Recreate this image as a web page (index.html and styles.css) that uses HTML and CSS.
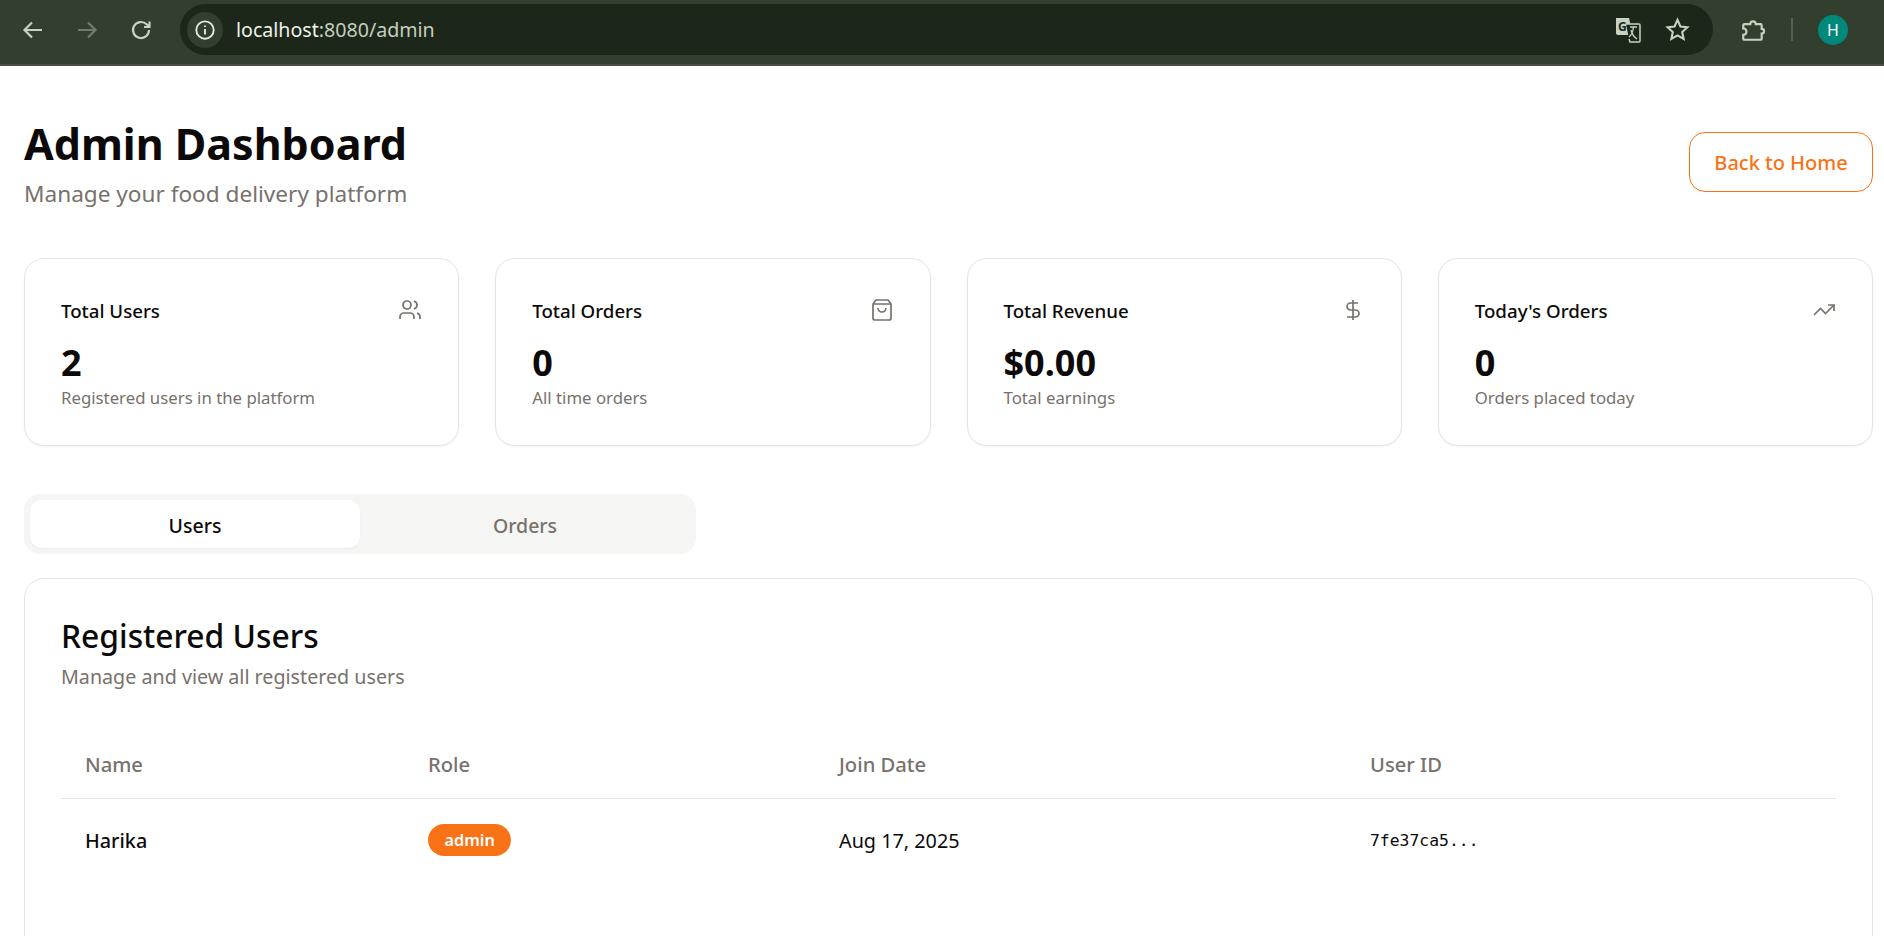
FILE: index.html
```html
<!DOCTYPE html>
<html>
  <head>
    <title>Admin Dashboard</title>
    <link rel="stylesheet" href="styles.css">
  </head>
  <body>
    <div class="toolbar">
      <button class="nav-btn">
        <svg viewBox="0 0 24 24" class="nav-icon"><path d="M21 12H4M11 4.500 3.500 12l7.500 7.500"/></svg>
      </button>
      <button class="nav-btn nav-btn-off">
        <svg viewBox="0 0 24 24" class="nav-icon"><path d="M3 12h17M13 4.500l7.500 7.500-7.500 7.500"/></svg>
      </button>
      <button class="nav-btn">
        <svg viewBox="0 0 24 24" class="nav-icon"><path d="M20 12a8 8 0 1 1-2.400-5.700L20 8.600M20.500 3.500v5.500H15"/></svg>
      </button>
      <div class="omnibox">
        <span class="info-chip">
          <svg viewBox="0 0 24 24" class="info-icon">
            <circle cx="12" cy="12" r="9.500"/>
            <path d="M12 11v6M12 7v1.600"/>
          </svg>
        </span>
        <span class="url"><span class="url-host">localhost</span>:8080/admin</span>
        <svg viewBox="0 0 26 26" class="translate-icon">
          <path class="tr-back" d="M1 1h13l4 17H3a2 2 0 0 1-2-2z"/>
          <path class="tr-front" d="M11 7h13a1 1 0 0 1 1 1v16a1 1 0 0 1-1 1H15l-1-3"/>
          <text x="3" y="14" class="tr-g">G</text>
          <path class="tr-x" d="M15 10h7M18.500 10c-.5 5-2 8-4.500 10M16 13c1 4 3 7 6 9"/>
        </svg>
        <svg viewBox="0 0 24 24" class="star-icon"><path d="M12 2.800l2.800 6.300 6.700.7-5 4.600 1.400 6.700-5.900-3.400-5.900 3.400 1.400-6.700-5-4.600 6.700-.7z"/></svg>
      </div>
      <svg viewBox="0 0 24 24" class="puzzle-icon"><path d="M4 6.500h5.500a2.500 2.500 0 0 1 5 0H19a1 1 0 0 1 1 1V11a2.200 2.200 0 0 1 0 4.400V20a1 1 0 0 1-1 1H4a1 1 0 0 1-1-1v-3.500a3 3 0 0 0 0-6V7.500a1 1 0 0 1 1-1z"/></svg>
      <span class="toolbar-sep"></span>
      <span class="avatar">H</span>
    </div>

    <div class="page">
      <div class="page-head">
        <div>
          <h1>Admin Dashboard</h1>
          <p class="page-sub">Manage your food delivery platform</p>
        </div>
        <button class="home-btn">Back to Home</button>
      </div>

      <div class="stats">
        <div class="stat-card">
          <div class="stat-top">
            <span class="stat-title">Total Users</span>
            <svg viewBox="0 0 24 24" class="stat-icon"><path d="M16 21v-2a4 4 0 0 0-4-4H6a4 4 0 0 0-4 4v2"/><circle cx="9" cy="7" r="4"/><path d="M22 21v-2a4 4 0 0 0-3-3.870M16 3.130a4 4 0 0 1 0 7.750"/></svg>
          </div>
          <div class="stat-value">2</div>
          <div class="stat-note">Registered users in the platform</div>
        </div>
        <div class="stat-card">
          <div class="stat-top">
            <span class="stat-title">Total Orders</span>
            <svg viewBox="0 0 24 24" class="stat-icon"><path d="M6 2 3 6v14a2 2 0 0 0 2 2h14a2 2 0 0 0 2-2V6l-3-4z"/><path d="M3 6h18M16 10a4 4 0 0 1-8 0"/></svg>
          </div>
          <div class="stat-value">0</div>
          <div class="stat-note">All time orders</div>
        </div>
        <div class="stat-card">
          <div class="stat-top">
            <span class="stat-title">Total Revenue</span>
            <svg viewBox="0 0 24 24" class="stat-icon"><path d="M12 2v20M17 5H9.500a3.500 3.500 0 0 0 0 7h5a3.500 3.500 0 0 1 0 7H6"/></svg>
          </div>
          <div class="stat-value">$0.00</div>
          <div class="stat-note">Total earnings</div>
        </div>
        <div class="stat-card">
          <div class="stat-top">
            <span class="stat-title">Today's Orders</span>
            <svg viewBox="0 0 24 24" class="stat-icon"><path d="M22 7l-8.500 8.500-5-5L2 17"/><path d="M16 7h6v6"/></svg>
          </div>
          <div class="stat-value">0</div>
          <div class="stat-note">Orders placed today</div>
        </div>
      </div>

      <div class="tabs">
        <button class="tab tab-active">Users</button>
        <button class="tab">Orders</button>
      </div>

      <div class="panel">
        <h2>Registered Users</h2>
        <p class="panel-sub">Manage and view all registered users</p>
        <table class="users">
          <colgroup>
            <col class="col-name">
            <col class="col-role">
            <col class="col-date">
            <col class="col-id">
          </colgroup>
          <thead>
            <tr>
              <th>Name</th>
              <th>Role</th>
              <th>Join Date</th>
              <th>User ID</th>
            </tr>
          </thead>
          <tbody>
            <tr>
              <td class="user-name">Harika</td>
              <td><span class="badge">admin</span></td>
              <td>Aug 17, 2025</td>
              <td class="user-id">7fe37ca5...</td>
            </tr>
          </tbody>
        </table>
      </div>
    </div>
  </body>
</html>
```

FILE: styles.css
```css
* {
  box-sizing: border-box;
}
html, body {
  height: 100%;
}
body {
  margin: 0;
  overflow: hidden;
  background-color: #fff;
  color: #0c0a09;
  font-family: "Noto Sans", "Open Sans", sans-serif;
}
button {
  font-family: inherit;
  cursor: pointer;
}

/* browser bar */
.toolbar {
  display: flex;
  align-items: center;
  height: 66px;
  padding: 0 0 5px 6px;
  background-color: #323f2f;
  border-bottom: 2px solid #454e42;
}
.nav-btn {
  display: flex;
  align-items: center;
  justify-content: center;
  width: 54px;
  height: 48px;
  padding: 0;
  background: none;
  border: none;
}
.nav-icon {
  width: 24px;
  height: 24px;
  fill: none;
  stroke: #c6d3c0;
  stroke-width: 2.200;
}
.nav-btn-off .nav-icon {
  stroke: #717d6c;
}
.omnibox {
  display: flex;
  align-items: center;
  width: 1533px;
  height: 51px;
  margin-left: 12px;
  padding: 0 23px 0 7px;
  background-color: #1c271a;
  border-radius: 26px;
}
.info-chip {
  display: flex;
  align-items: center;
  justify-content: center;
  width: 36px;
  height: 36px;
  background-color: #323f2f;
  border-radius: 50%;
}
.info-icon {
  width: 22px;
  height: 22px;
  fill: none;
  stroke: #e6ece2;
  stroke-width: 2;
}
.url {
  flex: 1;
  margin-left: 13px;
  font-size: 19.6px;
  color: #c4cfbe;
}
.url-host {
  color: #eef3ea;
}
.translate-icon {
  width: 26px;
  height: 26px;
  margin-right: 24px;
}
.tr-back {
  fill: #c6d3c0;
}
.tr-front {
  fill: #1c271a;
  stroke: #c6d3c0;
  stroke-width: 1.500;
}
.tr-g {
  font-size: 12px;
  font-weight: 700;
  fill: #1c271a;
}
.tr-x {
  fill: none;
  stroke: #c6d3c0;
  stroke-width: 1.300;
}
.star-icon {
  width: 25px;
  height: 25px;
  fill: none;
  stroke: #c6d3c0;
  stroke-width: 2;
}
.puzzle-icon {
  width: 26px;
  height: 26px;
  margin-left: 27px;
  fill: none;
  stroke: #c6d3c0;
  stroke-width: 2;
}
.toolbar-sep {
  width: 2px;
  height: 23px;
  margin-left: 25px;
  background-color: #556151;
}
.avatar {
  display: flex;
  align-items: center;
  justify-content: center;
  width: 30px;
  height: 30px;
  margin-left: 25px;
  background-color: #00897b;
  border-radius: 50%;
  color: #fff;
  font-size: 16px;
}

/* page */
.page {
  height: calc(100% - 66px);
  overflow: hidden;
  padding: 52px 11px 0 24px;
}
.page-head {
  display: flex;
  justify-content: space-between;
  align-items: flex-start;
  margin-bottom: 49px;
}
h1 {
  margin: 0;
  font-size: 43px;
  line-height: 52px;
  font-weight: 700;
}
.page-sub {
  margin: 9px 0 0;
  font-size: 22.6px;
  line-height: 30px;
  color: #78716c;
}
.home-btn {
  width: 184px;
  height: 60px;
  margin-top: 14px;
  padding: 0;
  background-color: #fff;
  border: 1px solid #f97316;
  border-radius: 16px;
  color: #f97316;
  font-size: 20px;
  font-weight: 500;
}

.stats {
  display: grid;
  grid-template-columns: repeat(4, 1fr);
  gap: 36px;
  margin-bottom: 48px;
}
.stat-card {
  height: 188px;
  padding: 36px;
  background-color: #fff;
  border: 1px solid #e7e5e4;
  border-radius: 20px;
  box-shadow: 0 1px 2px rgba(0, 0, 0, 0.05);
}
.stat-top {
  display: flex;
  justify-content: space-between;
  align-items: flex-start;
}
.stat-title {
  margin-top: 3px;
  font-size: 18.7px;
  line-height: 26px;
  font-weight: 500;
}
.stat-icon {
  width: 24px;
  height: 24px;
  margin-top: 3px;
  fill: none;
  stroke: #78716c;
  stroke-width: 1.700;
}
.stat-value {
  margin-top: 17px;
  font-size: 36px;
  line-height: 44px;
  font-weight: 700;
}
.stat-note {
  margin-top: 1px;
  font-size: 16.8px;
  line-height: 24px;
  color: #78716c;
}

.tabs {
  display: grid;
  grid-template-columns: 1fr 1fr;
  width: 672px;
  height: 60px;
  padding: 6px;
  margin-bottom: 24px;
  background-color: #f5f5f4;
  border-radius: 16px;
}
.tab {
  padding: 2px 0 0;
  background: none;
  border: none;
  border-radius: 12px;
  color: #78716c;
  font-size: 19.5px;
  font-weight: 500;
}
.tab-active {
  background-color: #fff;
  color: #0c0a09;
  box-shadow: 0 1px 2px rgba(0, 0, 0, 0.05);
}

.panel {
  height: 420px;
  padding: 36px;
  border: 1px solid #e7e5e4;
  border-radius: 20px;
}
h2 {
  margin: 0;
  font-size: 31.8px;
  line-height: 42px;
  font-weight: 550;
}
.panel-sub {
  margin: 6px 0 0;
  font-size: 19.7px;
  line-height: 28px;
  color: #78716c;
}
.users {
  width: 100%;
  margin-top: 39px;
  table-layout: fixed;
  border-collapse: collapse;
}
.col-name {
  width: 343px;
}
.col-role {
  width: 411px;
}
.col-date {
  width: 531px;
}
.users th {
  height: 68px;
  padding: 0 24px;
  text-align: left;
  font-size: 20.2px;
  font-weight: 500;
  color: #78716c;
  border-bottom: 1px solid #e7e5e4;
}
.users td {
  height: 84px;
  padding: 0 24px;
  font-size: 19.8px;
}
.users .user-name {
  font-weight: 500;
}
.badge {
  display: inline-block;
  padding: 0 16.5px;
  height: 32px;
  line-height: 32px;
  background-color: #f97316;
  border-radius: 16px;
  color: #fff;
  font-size: 16.3px;
  font-weight: 600;
}
.users .user-id {
  font-family: "DejaVu Sans Mono", "Liberation Mono", monospace;
  font-size: 16.4px;
}
```
